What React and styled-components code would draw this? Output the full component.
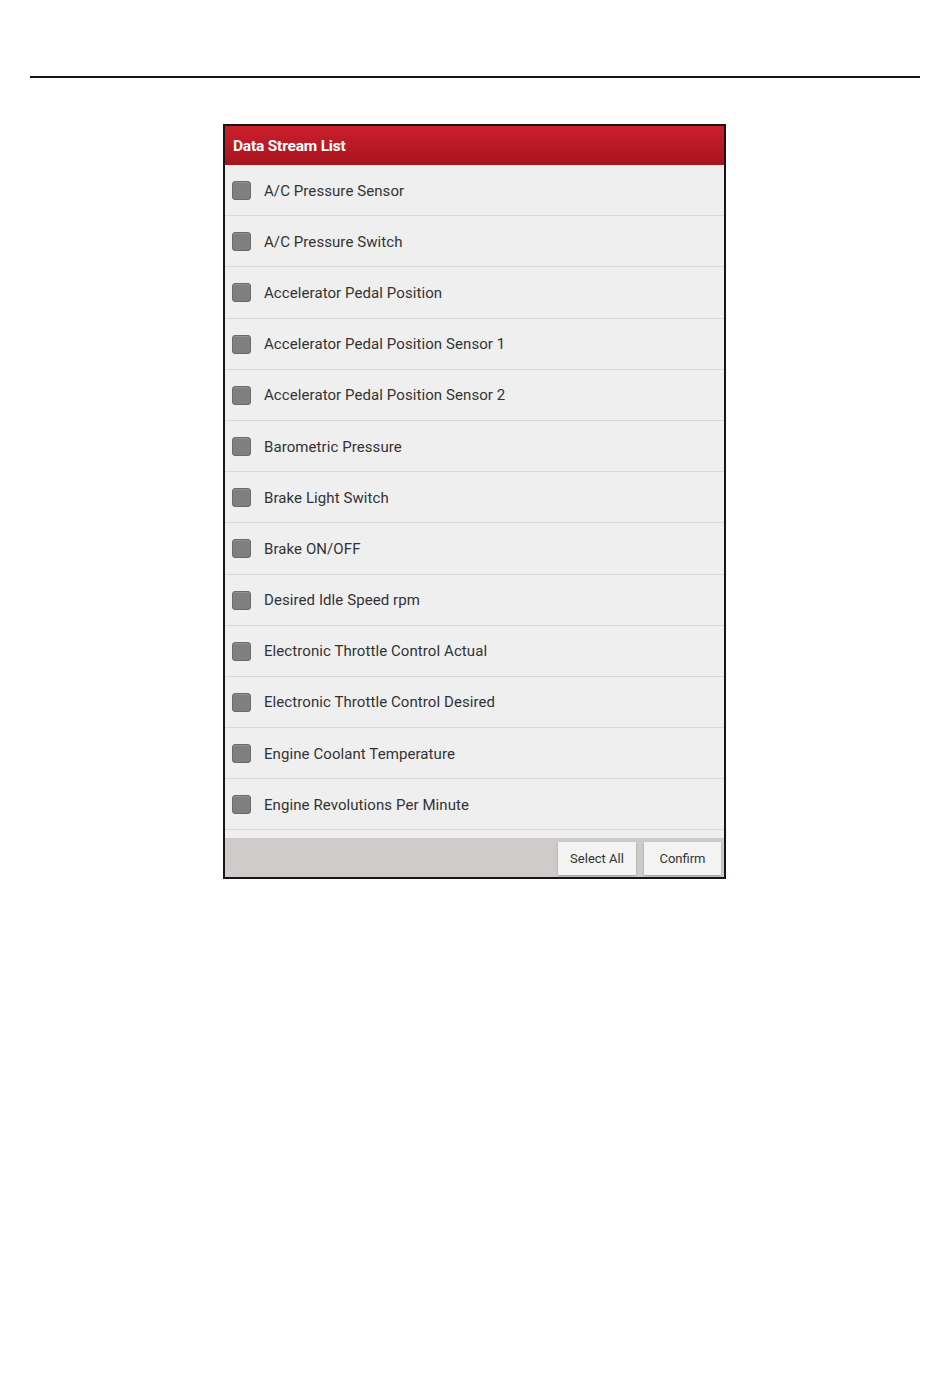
import React from "react";
import styled, { createGlobalStyle } from "styled-components";

const GlobalStyle = createGlobalStyle`
  body {
    margin: 0;
    background: #ffffff;
    font-family: "Roboto", "Liberation Sans", sans-serif;
  }
`;

const Page = styled.div`
  width: 950px;
  height: 1398px;
  padding-top: 76px;
  box-sizing: border-box;
`;

const Rule = styled.div`
  margin: 0 30px 0 30px;
  height: 2px;
  background: #141414;
`;

const Frame = styled.div`
  margin: 46px 0 0 223px;
  width: 503px;
  box-sizing: border-box;
  border: 2px solid #151515;
  display: flex;
  flex-direction: column;
  background: #efefef;
`;

const Header = styled.div`
  height: 39px;
  background: linear-gradient(#cb1f2c, #a8141f);
  color: #fff;
  display: flex;
  align-items: center;
  padding-left: 8px;
  font-size: 15.5px;
  font-weight: 700;
  letter-spacing: -0.2px;
`;

const List = styled.div`
  height: 673px;
  overflow: hidden;
  background: #efefef;
`;

const Row = styled.div`
  height: 50.2px;
  border-bottom: 1px solid #d9d9d9;
  display: flex;
  align-items: center;
  padding-left: 7px;
  gap: 13px;
  color: #333;
  font-size: 15px;
  letter-spacing: 0.08px;
  padding-top: 1px;
  box-sizing: border-box;
  height: 51.2px;
`;

const Check = styled.span`
  width: 17px;
  height: 17px;
  border-radius: 3px;
  background: #7f7f7f;
  border: 1px solid #6a6a6a;
  box-shadow: inset 0 1px 1px rgba(255, 255, 255, 0.15);
  flex: none;
`;

const Footer = styled.div`
  height: 39px;
  background: #d0cbcb;
  display: flex;
  justify-content: flex-end;
  align-items: center;
  gap: 8px;
  padding-right: 3px;
  padding-top: 2px;
  box-sizing: border-box;
`;

const Button = styled.button`
  width: ${(p) => p.w}px;
  height: 33px;
  border: none;
  background: #f3f3f3;
  box-shadow: 0 1px 2px rgba(0, 0, 0, 0.25);
  font-family: "Roboto", "Liberation Sans", sans-serif;
  font-size: 13px;
  color: #333;
  padding: 0;
`;

const items = [
  "A/C Pressure Sensor",
  "A/C Pressure Switch",
  "Accelerator Pedal Position",
  "Accelerator Pedal Position Sensor 1",
  "Accelerator Pedal Position Sensor 2",
  "Barometric Pressure",
  "Brake Light Switch",
  "Brake ON/OFF",
  "Desired Idle Speed rpm",
  "Electronic Throttle Control Actual",
  "Electronic Throttle Control Desired",
  "Engine Coolant Temperature",
  "Engine Revolutions Per Minute",
  "",
];

export default function App() {
  return (
    <Page>
      <GlobalStyle />
      <Rule />
      <Frame>
        <Header>Data Stream List</Header>
        <List>
          {items.map((name, i) => (
            <Row key={i}>
              {name && <Check />}
              {name}
            </Row>
          ))}
        </List>
        <Footer>
          <Button w={78}>Select All</Button>
          <Button w={77}>Confirm</Button>
        </Footer>
      </Frame>
    </Page>
  );
}
